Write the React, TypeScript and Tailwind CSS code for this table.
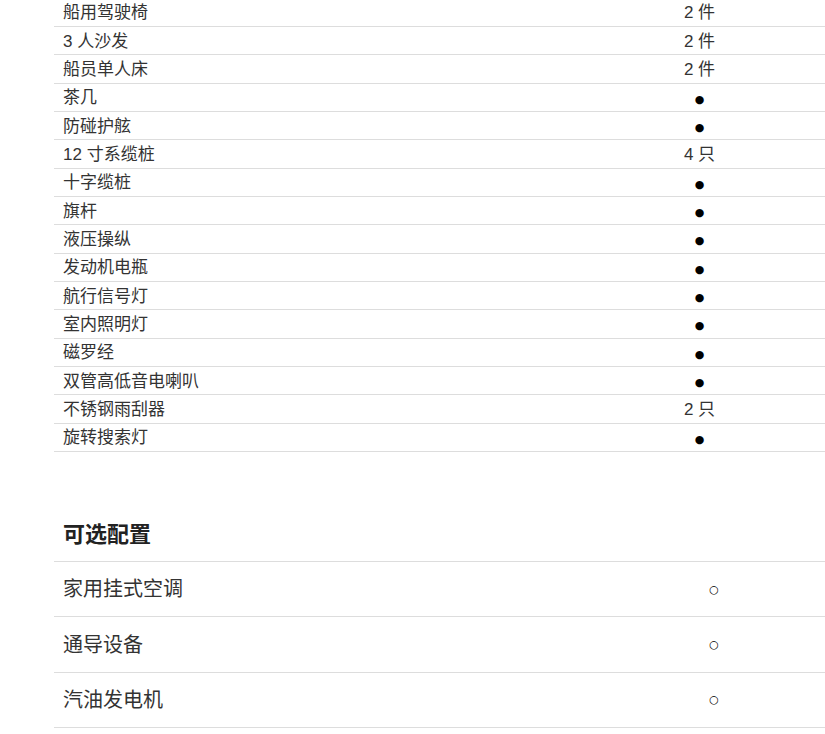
const standard: [string, string][] = [
  ["船用驾驶椅", "2 件"],
  ["3 人沙发", "2 件"],
  ["船员单人床", "2 件"],
  ["茶几", "●"],
  ["防碰护舷", "●"],
  ["12 寸系缆桩", "4 只"],
  ["十字缆桩", "●"],
  ["旗杆", "●"],
  ["液压操纵", "●"],
  ["发动机电瓶", "●"],
  ["航行信号灯", "●"],
  ["室内照明灯", "●"],
  ["磁罗经", "●"],
  ["双管高低音电喇叭", "●"],
  ["不锈钢雨刮器", "2 只"],
  ["旋转搜索灯", "●"],
];

const optional = ["家用挂式空调", "通导设备", "汽油发电机"];

export default function App() {
  return (
    <main
      className="min-h-screen overflow-hidden bg-white pl-[54px] text-[#333]"
      style={{ fontFamily: '"Liberation Sans", "Noto Sans CJK SC", sans-serif' }}
    >
      <div className="-mt-[1.33px]">
        {standard.map(([name, value]) => (
          <div key={name} className="flex h-[28.33px] items-center border-b border-[#ddd]">
            <div className="w-[520px] pl-[9px] pt-px text-[17px] leading-none">{name}</div>
            <div className="flex-1 pt-px text-center leading-none">
              {value === "●" ? (
                <span className="font-['DejaVu_Sans'] text-[11px] text-black">●</span>
              ) : (
                <span className="text-[17px]">{value}</span>
              )}
            </div>
          </div>
        ))}
      </div>

      <h2 className="mt-[68px] pl-[9px] text-[22px] font-bold leading-[30px] text-[#222]">可选配置</h2>

      <div className="mt-[11px] border-t border-[#ddd]">
        {optional.map((name) => (
          <div key={name} className="flex h-[55.4px] items-center border-b border-[#ddd]">
            <div className="w-[549px] pl-[9px] text-[20px] leading-none">{name}</div>
            <div className="flex-1 text-center font-['DejaVu_Sans'] text-[11px] leading-none text-black">○</div>
          </div>
        ))}
      </div>
    </main>
  );
}
